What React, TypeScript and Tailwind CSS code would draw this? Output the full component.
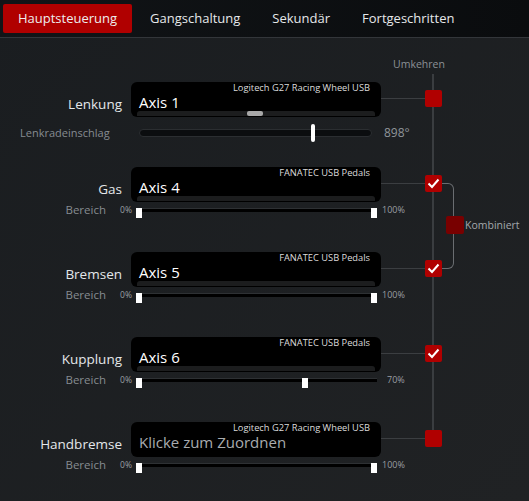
import React from "react"

const tabs = ["Hauptsteuerung", "Gangschaltung", "Sekundär", "Fortgeschritten"]

const Check = ({ checked }: { checked: boolean }) => (
  <div className="mt-[8px] w-[17px] h-[17px] rounded-[2px] bg-[#b00000] flex items-center justify-center shrink-0">
    {checked && (
      <svg width="13" height="11" viewBox="0 0 13 11">
        <path d="M1.5 5.5 L5 9 L11.5 1.5" fill="none" stroke="white" strokeWidth="2" />
      </svg>
    )}
  </div>
)

const AxisBox = ({
  axis,
  device,
  strip,
  thumb,
  empty,
}: {
  axis: string
  device: string
  strip?: boolean
  thumb?: boolean
  empty?: boolean
}) => (
  <div className="w-[250px] h-[35px] rounded-[6px] bg-black flex flex-col px-[6px] shrink-0">
    <div className="text-right text-[9.3px] leading-[12px] pr-[5px] text-[#dcdcdc] whitespace-nowrap">{device}</div>
    <div
      className={
        empty
          ? "pl-[2px] text-[15px] leading-[17px] text-[#a9acaf] whitespace-nowrap"
          : "pl-[2px] text-[15px] leading-[17px] text-white whitespace-nowrap"
      }
    >
      {axis}
    </div>
    {strip && (
      <div className="mt-auto mb-px h-[5px] rounded-t-[3px] bg-[#1c1d1e] flex">
        {thumb && <div className="ml-[110px] w-[16px] h-[5px] rounded-[2px] bg-[#a8a8a8]" />}
      </div>
    )}
  </div>
)

const Bereich = ({ max, right }: { max: string; right: number }) => (
  <div className="flex items-start pt-px">
    <span className="w-[106px] text-right text-[11.5px] leading-[14px] text-[#868c91]">Bereich</span>
    <span className="w-[30px] pr-[4px] text-right text-[8.5px] leading-[14px] text-[#9a9fa3]">0%</span>
    <div className="relative w-[241px] h-[10px] mt-[5px]">
      <div className="absolute left-0 right-0 top-0 h-[4px] bg-black border-t border-[#2e3134]" />
      <div className="absolute left-0 top-0 w-[6px] h-[10px] bg-white" />
      <div className="absolute top-0 w-[6px] h-[10px] bg-white" style={{ left: right }} />
    </div>
    <span className={max === "70%" ? "ml-[10px] text-[9px] leading-[14px] text-[#9a9fa3]" : "ml-[5px] text-[9px] leading-[14px] text-[#9a9fa3]"}>
      {max}
    </span>
  </div>
)

const Row = ({
  label,
  children,
  sub,
  checked,
}: {
  label: string
  children: React.ReactNode
  sub: React.ReactNode
  checked: boolean
}) => (
  <div className="h-[85px] flex flex-col relative z-10">
    <div className="flex items-start h-[35px]">
      <div className="w-[131px] pr-[9px] pt-[12px] text-right text-[13.5px] leading-[20px] text-[#e4e7ea]">{label}</div>
      {children}
      <div className="w-[44px] h-px bg-[#3b3e41] mt-[16px]" />
      <Check checked={checked} />
    </div>
    {sub}
  </div>
)

export default function App() {
  return (
    <div className="w-[529px] h-[501px] overflow-hidden bg-gradient-to-br from-[#1a1d20] to-[#202224] font-['Open_Sans',sans-serif] text-white">
      <header className="h-[38px] border-b border-[#33363a] bg-gradient-to-r from-[#111417] to-[#0a0c0e] flex items-start pt-[4px] pl-[3px]">
        {tabs.map((t, i) => (
          <div
            key={t}
            className={
              i === 0
                ? "h-[29px] px-[15px] mr-[2px] rounded-[2px] bg-[#b00000] text-[13px] leading-[29px] text-[#eeeeee]"
                : "h-[29px] px-[16px] text-[13px] leading-[29px] text-[#e6e8ea]"
            }
          >
            {t}
          </div>
        ))}
      </header>

      <main className="relative">
        {/* Umkehren column line and Kombiniert bracket */}
        <div className="absolute left-[432px] top-[36px] w-[2px] h-[358px] bg-[#3a3d40]" />
        <div className="absolute left-[442px] top-[145px] w-[12px] h-[86px] border-t border-r border-b border-[#6a6d71] rounded-r-[6px]" />
        <div className="absolute left-[446px] top-[178px] flex items-center gap-px z-10">
          <div className="w-[18px] h-[18px] rounded-[2px] bg-[#780000]" />
          <span className="text-[10.5px] leading-[14px] text-[#a3a8ac]">Kombiniert</span>
        </div>

        <div className="h-[44px] pl-[393px] pt-[19px] text-[10.5px] leading-[14px] text-[#8c9196]">Umkehren</div>

        <Row
          label="Lenkung"
          checked={false}
          sub={
            <div className="flex items-center h-[32px]">
              <span className="w-[139px] pl-[20px] text-[11px] text-[#868c91]">Lenkradeinschlag</span>
              <div className="relative w-[233px] h-[8px] rounded-full bg-[#0b0d0f] border border-[#2b2e31]">
                <div className="absolute left-[171px] top-[-6px] w-[4px] h-[18px] rounded-[2px] bg-white" />
              </div>
              <span className="ml-[12px] text-[12px] text-[#8f959a]">898°</span>
            </div>
          }
        >
          <AxisBox axis="Axis 1" device="Logitech G27 Racing Wheel USB" strip thumb />
        </Row>

        <Row label="Gas" checked sub={<Bereich max="100%" right={235} />}>
          <AxisBox axis="Axis 4" device="FANATEC USB Pedals" strip />
        </Row>

        <Row label="Bremsen" checked sub={<Bereich max="100%" right={235} />}>
          <AxisBox axis="Axis 5" device="FANATEC USB Pedals" strip />
        </Row>

        <Row label="Kupplung" checked sub={<Bereich max="70%" right={166} />}>
          <AxisBox axis="Axis 6" device="FANATEC USB Pedals" strip />
        </Row>

        <Row label="Handbremse" checked={false} sub={<Bereich max="100%" right={235} />}>
          <AxisBox axis="Klicke zum Zuordnen" device="Logitech G27 Racing Wheel USB" empty />
        </Row>
      </main>
    </div>
  )
}
